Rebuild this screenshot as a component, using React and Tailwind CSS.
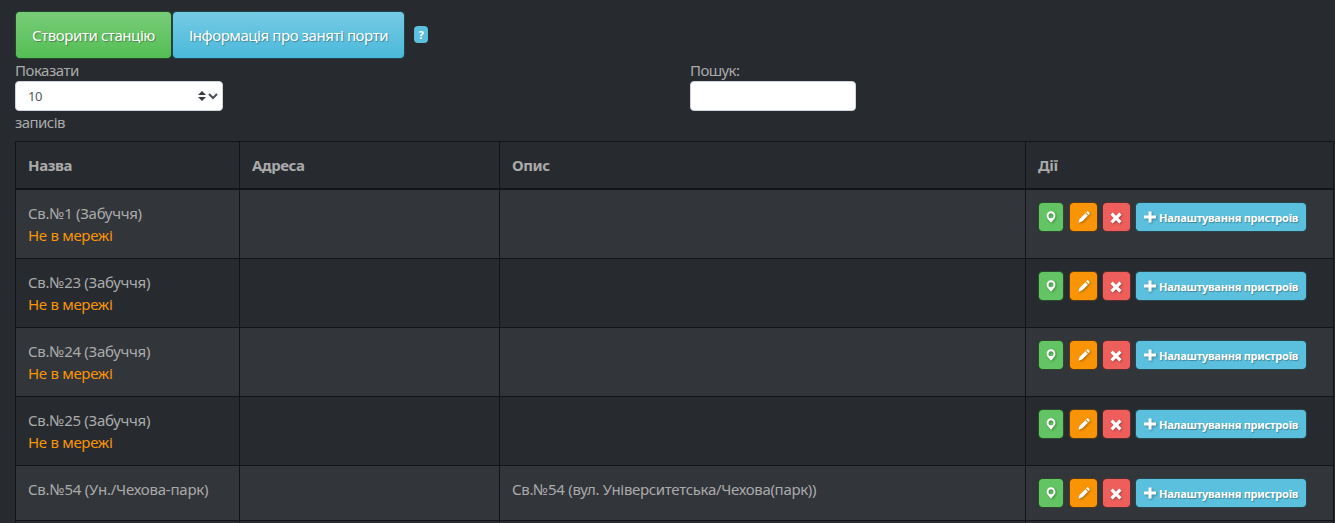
import React from "react";

const rows = [
  { name: "Св.№1 (Забуччя)", offline: true, description: "" },
  { name: "Св.№23 (Забуччя)", offline: true, description: "" },
  { name: "Св.№24 (Забуччя)", offline: true, description: "" },
  { name: "Св.№25 (Забуччя)", offline: true, description: "" },
  {
    name: "Св.№54 (Ун./Чехова-парк)",
    offline: false,
    description: "Св.№54 (вул. Університетська/Чехова(парк))",
  },
];

const iconShadow = "overflow-visible drop-shadow-[1px_1px_1px_rgba(0,0,0,0.3)]";

function MarkerIcon() {
  return (
    <svg className={`h-3 w-2.5 ${iconShadow}`} viewBox="0 0 10 12">
      <path
        fill="#fff"
        fillRule="evenodd"
        d="M5 .3a4.4 4.4 0 0 0-4.4 4.4c0 1.4.7 2.6 1.5 3.6L5 11.800l2.900-3.500c.8-1 1.500-2.200 1.500-3.600A4.400 4.400 0 0 0 5 .3zM5 2.200a2.500 2.500 0 1 1 0 5 2.500 2.500 0 0 1 0-5z"
      />
    </svg>
  );
}

function PencilIcon() {
  return (
    <svg className={`h-3 w-3 ${iconShadow}`} viewBox="0 0 12 12">
      <path
        fill="#fff"
        d="M9 .6c.4-.4.9-.4 1.300 0l1.200 1.200c.4.4.4.9 0 1.300l-.9.9L8.100 1.500zM7.400 2.200 9.900 4.700 4.400 10.300 1.200 11.400c-.5.100-.8-.2-.7-.7L1.700 7.700z"
      />
    </svg>
  );
}

function RemoveIcon() {
  return (
    <svg className={`mt-0.5 mr-px h-3 w-3 ${iconShadow}`} viewBox="0 0 12 12">
      <path fill="#fff" d="M2.700.5 6 3.700 9.300.5l2.200 2.200L8.300 6l3.200 3.300-2.200 2.200L6 8.300l-3.300 3.200L.5 9.300 3.700 6 .5 2.700z" />
    </svg>
  );
}

function PlusIcon() {
  return (
    <svg className={`mb-px h-3 w-3 shrink-0 ${iconShadow}`} viewBox="0 0 12 12">
      <path fill="#fff" d="M4.500.5h3v4H12v3H7.500v4h-3v-4H0v-3h4.500z" />
    </svg>
  );
}

const smallButton =
  "flex h-[30px] items-center justify-center rounded-[4px] border bg-clip-padding";
const bigButton =
  "h-12 rounded-[4px] border bg-clip-padding text-[15px] text-white whitespace-nowrap [text-shadow:1px_1px_1px_rgba(0,0,0,0.3)]";

function Actions() {
  return (
    <div className="flex">
      <button className={`${smallButton} w-[26px] border-[#294a2c] bg-[#62c462]`}>
        <MarkerIcon />
      </button>
      <button className={`${smallButton} ml-[5px] w-[29px] border-[#573b15] bg-[#f89406]`}>
        <PencilIcon />
      </button>
      <button className={`${smallButton} ml-1 w-[29px] border-[#562e30] bg-[#ee5f5b]`}>
        <RemoveIcon />
      </button>
      <button className={`${smallButton} ml-1 w-[172px] gap-[3px] border-[#27474f] bg-[#5bc0de]`}>
        <PlusIcon />
        <span className="pt-px text-[11px] font-bold tracking-[-0.24px] whitespace-nowrap text-white [text-shadow:1px_1px_1px_rgba(0,0,0,0.3)]">
          Налаштування пристроїв
        </span>
      </button>
    </div>
  );
}

const cell = "border-r border-b border-[#121416] px-3 align-top first:border-l";

export default function App() {
  return (
    <div className="h-[523px] w-[1335px] overflow-hidden bg-[#272b30] pt-[11px] pl-[15px] font-['Noto_Sans',sans-serif] text-[15px] leading-[22px] text-[#aaa]">
      <div className="flex items-start">
        <button className={`${bigButton} w-[157px] border-[#23452a] bg-linear-to-b from-[#78cc78] to-[#53be53]`}>
          <span className="inline-block tracking-[-0.42px]">Створити станцію</span>
        </button>
        <button className={`${bigButton} w-[233px] border-[#22424d] bg-linear-to-b from-[#74cae3] to-[#4ab9db]`}>
          <span className="inline-block tracking-[-0.42px]">Інформація про заняті порти</span>
        </button>
        <span className="mt-[15px] ml-[9px] flex h-[17px] w-[14px] items-center justify-center rounded-[4px] bg-[#5bc0de] text-[11px] font-bold text-white">
          ?
        </span>
      </div>

      <div className="flex h-[82px] items-start">
        <label className="block w-[675px]">
          <span className="block h-[22px] tracking-[-0.5px]">Показати</span>
          <span className="flex h-[30px] w-[208px] items-center rounded-[4px] border border-[#ced4da] bg-white pr-1 pl-3 text-[13px] text-[#52575c]">
            <span className="grow tracking-[-0.4px]">10</span>
            <svg className="h-[10px] w-2" viewBox="0 0 8 10">
              <path fill="#343a40" d="M4 0 8 4H0zM4 10 0 6h8z" />
            </svg>
            <svg className="ml-[2px] h-[10px] w-[10px]" viewBox="0 0 10 10">
              <path fill="none" stroke="#495057" strokeWidth="2" d="m1 3 4 4 4-4" />
            </svg>
          </span>
          <span className="block tracking-[-0.55px]">записів</span>
        </label>
        <label className="block">
          <span className="block h-[22px] tracking-[-0.6px]">Пошук:</span>
          <input className="block h-[30px] w-[166px] rounded-[4px] border border-[#ced4da] bg-white" />
        </label>
      </div>

      <table className="w-[1319px] table-fixed border-separate border-spacing-0">
        <colgroup>
          <col className="w-[225px]" />
          <col className="w-[260px]" />
          <col className="w-[526px]" />
          <col className="w-[308px]" />
        </colgroup>
        <thead>
          <tr className="h-[49px] text-left">
            {["Назва", "Адреса", "Опис", "Дії"].map((title) => (
              <th key={title} className={`${cell} border-t border-b-2 pt-3 font-bold tracking-[-0.4px]`}>
                {title}
              </th>
            ))}
          </tr>
        </thead>
        <tbody>
          {rows.map((row) => (
            <tr
              key={row.name}
              className={`${row.offline ? "h-[69px]" : "h-[55px]"} odd:bg-[#32353a] even:bg-[#272b30]`}
            >
              <td
                className={`${cell} pt-3 whitespace-nowrap ${row.offline ? "tracking-[-0.3px]" : "tracking-[-0.23px]"}`}
              >
                {row.name}
                {row.offline && <div className="text-[#f89406]">Не в мережі</div>}
              </td>
              <td className={cell} />
              <td className={`${cell} pt-3 whitespace-nowrap tracking-[-0.32px]`}>{row.description}</td>
              <td className={`${cell} pt-3`}>
                <Actions />
              </td>
            </tr>
          ))}
          <tr className="h-3">
            <td className={cell} />
            <td className={cell} />
            <td className={cell} />
            <td className={cell} />
          </tr>
        </tbody>
      </table>
    </div>
  );
}
